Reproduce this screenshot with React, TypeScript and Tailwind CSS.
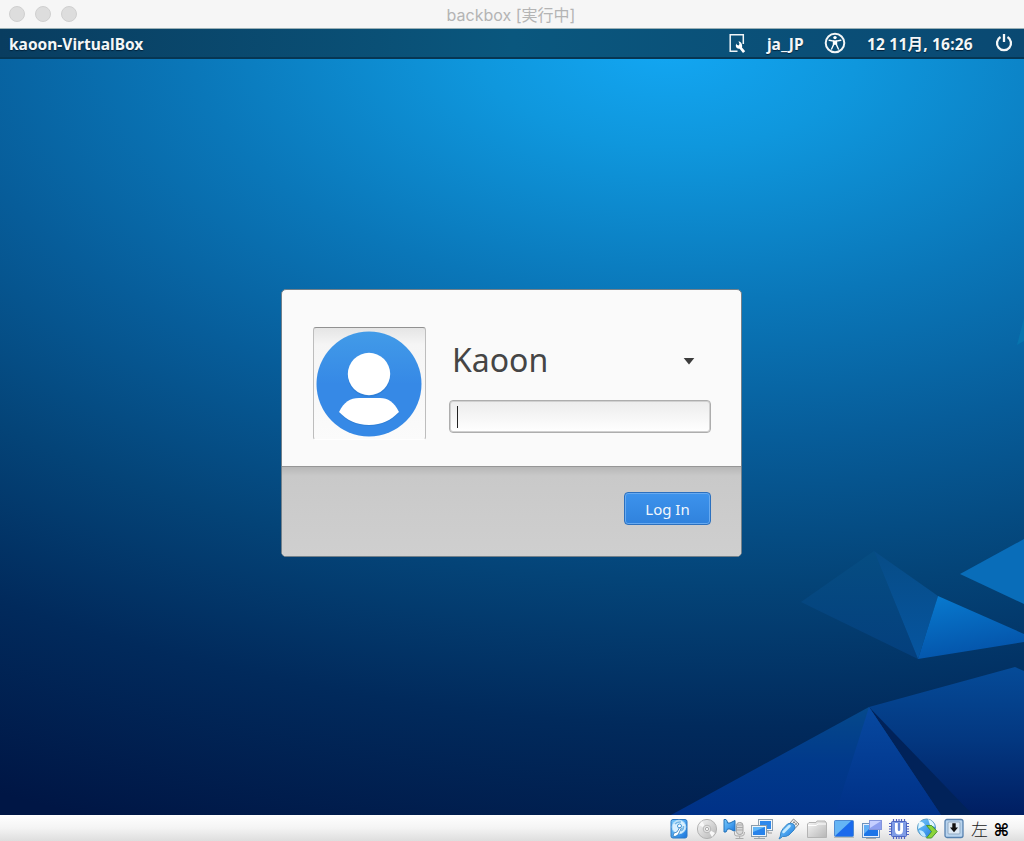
import React from "react";

function Wallpaper() {
  return (
    <svg className="col-start-1 row-start-1 block" width="1024" height="756" viewBox="0 59 1024 756" aria-hidden="true">
      <defs>
        <radialGradient id="sky" gradientUnits="userSpaceOnUse" cx="0" cy="0" r="1" gradientTransform="translate(665 45) rotate(3) scale(1600 850)">
          <stop offset="0" stopColor="#13a7f3" />
          <stop offset="0.12" stopColor="#0f97dd" />
          <stop offset="0.3" stopColor="#0a77b9" />
          <stop offset="0.46" stopColor="#075d9a" />
          <stop offset="0.63" stopColor="#044478" />
          <stop offset="0.8" stopColor="#012a5c" />
          <stop offset="1" stopColor="#001645" />
        </radialGradient>
        <linearGradient id="p1" x1="0" y1="0" x2="0" y2="1"><stop offset="0" stopColor="#064d82" /><stop offset="1" stopColor="#043f7d" /></linearGradient>
        <linearGradient id="p2" x1="0" y1="0" x2="0" y2="1"><stop offset="0" stopColor="#074c86" /><stop offset="1" stopColor="#0655a0" /></linearGradient>
        <linearGradient id="p3" x1="0" y1="0" x2="0.3" y2="1"><stop offset="0" stopColor="#087bd0" /><stop offset="1" stopColor="#0454aa" /></linearGradient>
        <linearGradient id="p4" x1="0" y1="0" x2="0" y2="1"><stop offset="0" stopColor="#05498b" /><stop offset="0.5" stopColor="#013a8b" /><stop offset="1" stopColor="#003187" /></linearGradient>
        <linearGradient id="p5" x1="0" y1="0" x2="0" y2="1"><stop offset="0" stopColor="#0749a0" /><stop offset="1" stopColor="#003087" /></linearGradient>
        <linearGradient id="p6" x1="0" y1="0" x2="0" y2="1"><stop offset="0" stopColor="#054b98" /><stop offset="0.5" stopColor="#033780" /><stop offset="1" stopColor="#001e62" /></linearGradient>
      </defs>
      <rect y="59" width="1024" height="756" fill="url(#sky)" />
      <path d="M1024 318 1017 345 1024 341Z" fill="#0878b0" opacity=".75" />
      <path d="M801 602 874 551 918 659Z" fill="url(#p1)" />
      <path d="M874 551 938 596 918 659Z" fill="url(#p2)" />
      <path d="M938 596 1024 634V642L918 659Z" fill="url(#p3)" />
      <path d="M960 574 1024 539V604Z" fill="#096db9" />
      <path d="M869 707 1015 667 1024 671V815H941Z" fill="url(#p6)" />
      <path d="M869 707 973 815H941Z" fill="#012259" />
      <path d="M869 707 941 815H671Z" fill="url(#p4)" />
      <path d="M869 707 941 815H835Z" fill="url(#p5)" />
    </svg>
  );
}

function TopPanel() {
  return (
    <div className="flex h-[30px] items-center border-b-2 border-[#063653] bg-linear-to-r from-[#093d60] via-[#0a577e] to-[#0a4972] pr-[11px] pl-[9px] font-['Noto_Sans','Noto_Sans_CJK_JP',sans-serif] text-[15.5px] leading-none font-bold text-[#f4f7f8] [text-shadow:0_1px_1px_#00223c]">
      <span className="w-[136px] pt-[3px] whitespace-nowrap">kaoon-VirtualBox</span>
      <svg className="mt-px ml-auto" width="18" height="22" viewBox="0 0 18 22" fill="none" aria-hidden="true">
        <path d="M8.5 18.2H1.2V1.7H14.3V11" stroke="#f0f5f7" strokeWidth="1.5" />
        <path d="M9.5 8.2 10.5 11 9.6 12.4 7.8 11.7 7.4 10.6C5.8 13.5 7.6 16.2 10.6 15.7L14 20 16.2 18.2 13 14.6C13.7 11.5 12 8.4 9.5 8.2Z" fill="#fff" />
      </svg>
      <span className="ml-[20px] w-[38px] pt-[3px] whitespace-nowrap">ja_JP</span>
      <svg className="ml-[19px]" width="22" height="22" viewBox="0 0 22 22" fill="none" aria-hidden="true">
        <circle cx="11" cy="11" r="9.3" stroke="#f3f6f7" strokeWidth="2" />
        <circle cx="11" cy="5.6" r="1.7" fill="#fff" />
        <path d="M5.2 8.3 9.5 9V12.8L7.6 17M16.8 8.3 12.5 9V12.8L14.4 17" stroke="#fff" strokeWidth="1.4" strokeLinecap="round" />
        <path d="M9 8.4H13V12.8H9Z" fill="#fff" />
      </svg>
      <span className="ml-[21px] w-[107px] pt-[3px] tracking-[0.2px] whitespace-nowrap">12 11月, 16:26</span>
      <svg className="ml-[21px]" width="18" height="20" viewBox="0 0 18 20" fill="none" stroke="#f5f7f8" strokeWidth="2.3" aria-hidden="true">
        <path d="M5.5 4.1A7 7 0 1 0 12.5 4.1M9 1V9" />
      </svg>
    </div>
  );
}

function Avatar() {
  return (
    <div className="flex h-[113px] w-[113px] items-center justify-center rounded-[3px] border border-t-[#919191] border-r-[#bdbdbd] border-b-white border-l-[#bdbdbd] bg-linear-to-b from-[#e5e5e5] via-[#f5f5f5] via-15% to-[#fbfbfb] pr-px">
      <svg width="106" height="106" viewBox="0 0 106 106" aria-hidden="true">
        <defs>
          <linearGradient id="avatar" x1="0" y1="0" x2="0" y2="1"><stop stopColor="#429be8" /><stop offset=".5" stopColor="#3689e6" /></linearGradient>
        </defs>
        <circle cx="53" cy="53" r="52.5" fill="url(#avatar)" />
        <g fill="#2471c3" opacity=".4" transform="translate(0 1)">
          <circle cx="53" cy="43.5" r="21.3" />
          <path d="M23 81C28 71 34 67 43 67H64C72 67 78 71 83 81C75 89 66 94 53 94S31 89 23 81Z" />
        </g>
        <g fill="#fff">
          <circle cx="53" cy="43" r="21.2" />
          <path d="M23 81C28 71 34 67 43 67H64C72 67 78 71 83 81C75 89 66 94 53 94S31 89 23 81Z" />
        </g>
      </svg>
    </div>
  );
}

function LoginCard() {
  return (
    <main className="col-start-1 row-start-1 mt-[230px] ml-[281px] h-[268px] w-[461px] overflow-hidden rounded-[5px] border border-[#72808a] bg-[#fafafa] font-['Noto_Sans',sans-serif]">
      <div className="flex h-[177px] border-b border-[#969696] pt-[37px] pl-[31px]">
        <Avatar />
        <div className="ml-[23px] w-[262px]">
          <div className="flex h-[73px] items-center justify-between pr-[16px] pb-[7px] pl-[3px] text-[32px] leading-none text-[#454545]">
            <span className="w-[96px]">Kaoon</span>
            <svg className="mt-[2px]" width="12" height="8" viewBox="0 0 12 8" aria-hidden="true"><path d="M.7 1H11.3L6 7.4Z" fill="#3c3c3c" /></svg>
          </div>
          <div className="flex h-[33px] items-center rounded-[4px] border border-[#adadad] bg-linear-to-b from-[#ececec] to-white pl-[7px] shadow-[inset_0_0_0_1px_#d0d0d0]">
            <div className="h-[22px] w-px bg-[#222]" />
          </div>
        </div>
      </div>
      <div className="flex h-[89px] justify-end bg-linear-to-b from-[#b7b7b7] via-[#c9c9c9] via-10% to-[#cfcfcf] pt-[25px] pr-[30px]">
        <button className="h-[33px] w-[87px] rounded-[4px] border border-[#2c70be] bg-linear-to-b from-[#3d93ec] to-[#3082dd] pt-px text-[15px] leading-[30px] text-[#f2f7fc] shadow-[inset_0_0_0_1px_#68aaf0]">Log In</button>
      </div>
    </main>
  );
}

type IconKind = "disk" | "cd" | "audio" | "network" | "usb" | "folder" | "display" | "windows" | "cpu" | "mouse" | "capture";

function StatusIcon({ kind }: { kind: IconKind }) {
  return (
    <svg width="22" height="22" viewBox="0 0 22 22" aria-hidden="true">
      {kind === "disk" && <>
        <rect x="3" y="1.5" width="16" height="18.5" rx="2" fill="url(#status-blue)" stroke="#2d78c3" />
        <circle cx="11" cy="9" r="6.8" fill="#d9f0ff" stroke="#b4ddf8" />
        <path d="M7 6Q9 3.5 13 4M15.5 8Q16 11 13 13" fill="none" stroke="#74b7e7" strokeWidth="1.5" />
        <circle cx="11.5" cy="8" r="2" fill="#fff" stroke="#4096d6" />
        <path d="M5 18Q5 14 9 14L12 9 13.3 10 11 15Q10 18 7 18.5Z" fill="#fff" stroke="#297abd" strokeWidth=".8" />
      </>}
      {kind === "cd" && <>
        <circle cx="11" cy="11" r="9.6" fill="url(#status-gray)" stroke="#b3b3b3" />
        <path d="m10 10-4-7-3 4 7 4M12 12l4 7 3-4-7-4" fill="#f8f8f8" />
        <circle cx="11" cy="11" r="3.8" fill="#e4e4e4" stroke="#b7b7b7" />
        <circle cx="11" cy="11" r="1.6" fill="#fff" stroke="#aaa" />
      </>}
      {kind === "audio" && <>
        <path d="M1 1.5H3Q4.5 3 4.5 5H7L12 2.5V13.5L7 11H4.5L3 14H1Z" fill="url(#status-blue)" stroke="#2572b8" />
        <rect x="13.5" y="4.5" width="6.5" height="12" rx="3" fill="#d8d8d8" stroke="#a3a3a3" />
        <path d="M13.5 7H20M13.5 9.5H20M13.5 12H20M11.5 13v3Q11.5 18 14 18H19Q21.5 18 21.5 14M16.7 18v2M12.5 20.5h8" stroke="#ababab" fill="none" />
      </>}
      {kind === "network" && <>
        <rect x="7.5" y="1.5" width="14" height="11" fill="#f2f6f9" stroke="#8c9faf" />
        <rect x="9" y="3" width="11" height="8" fill="#3189eb" />
        <path d="M17 13v2h4" stroke="#999" fill="none" />
        <rect x=".5" y="7.5" width="15" height="11" fill="#eef5fa" stroke="#899cab" />
        <rect x="2" y="9" width="12" height="8" fill="#2783eb" />
        <path d="M2 9H14L2 14Z" fill="#61b7f8" />
        <path d="M8 19v1M3 20.5h11" stroke="#9ba5ad" fill="none" />
      </>}
      {kind === "usb" && <>
        <path d="m12 5 3.5-4L21 6 17 10.5Z" fill="#eeeeee" stroke="#888" />
        <path d="M1 21Q2.5 19 3 14Q4 11 9.5 6Q13 4 16 6.5Q18 9 16 12L11 17Q8 19 4.5 18.5Q3 20 1 21Z" fill="url(#status-blue)" stroke="#3985c5" />
        <path d="M5.5 14 11.5 8" stroke="#c5eaff" strokeWidth="2.5" strokeLinecap="round" />
        <circle cx="16" cy="4.3" r=".8" fill="#555" /><circle cx="18" cy="6" r=".8" fill="#555" />
      </>}
      {kind === "folder" && <>
        <path d="M1.5 19.5V6L3 4.5H10L11 3H19L20.5 5V19.5Z" fill="url(#status-gray)" stroke="#b4b4b4" />
        <path d="M2 7.5H10L12 6H20" stroke="#fff" fill="none" />
      </>}
      {kind === "display" && <>
        <rect x="1.5" y="2.5" width="19" height="16" rx="1" fill="#1b6aec" stroke="#508bd0" />
        <path d="M2 3H18L2 18Z" fill="#65b5f5" />
        <path d="M1 19.5H21" stroke="#bbb" />
      </>}
      {kind === "windows" && <>
        <rect x="1.5" y="5.5" width="17" height="14" fill="#e7effc" stroke="#6e93bd" />
        <rect x="3" y="7" width="14" height="11" fill="#1c75e8" />
        <path d="M3 7H12L3 16Z" fill="#62aff6" />
        <rect x="8.5" y="2.5" width="12" height="9" fill="#8d9ff0" stroke="#8495dc" />
        <path d="M9 3H20L9 10Z" fill="#c5cfff" />
        <path d="M5 20.5h10" stroke="#aaa" />
      </>}
      {kind === "cpu" && <>
        <path d="M5.5 1V21M8.5 1V21M11 1V21M13.5 1V21M16.5 1V21M1 5.5H21M1 8.5H21M1 11H21M1 13.5H21M1 16.5H21" stroke="#5362c4" strokeWidth="1.2" />
        <rect x="3.5" y="3.5" width="15" height="15" rx="1" fill="#7f9ce6" stroke="#4e67c2" />
        <path d="M7 5H15V12Q15 16.5 11 16.5T7 12Z" fill="#fff" />
        <path d="M9.8 5H12.2V11.5Q12.2 13 11 13T9.8 11.5Z" fill="#6886d8" />
      </>}
      {kind === "mouse" && <>
        <circle cx="10.5" cy="10" r="9" fill="url(#status-blue)" stroke="#5b9cc3" />
        <path d="M3 3.5Q7 3 9 7L2 11ZM12 1Q18 3 19 9L14 7Z" fill="#e0f6ff" />
        <path d="M3 12Q8 12 10 18L8 19Q4 17 3 12" fill="#bee9ff" />
        <path d="M10.5 7.5H15.5L21.2 13.5 15.5 20H10.5L14.5 15 15.5 13.5Z" fill="#8bd439" stroke="#4b9431" strokeLinejoin="round" />
      </>}
      {kind === "capture" && <>
        <rect x="2" y="1.5" width="18" height="18" rx="2" fill="#b9d4ee" stroke="#5681af" strokeWidth="1.3" />
        <rect x="5" y="4" width="12" height="12" rx="1" fill="#dce9f5" stroke="#91abc4" />
        <path d="M9.3 5.3H12.7V9.5H15L11 14.3 7 9.5H9.3Z" fill="#111" />
      </>}
    </svg>
  );
}

const statusIcons: IconKind[] = ["disk", "cd", "audio", "network", "usb", "folder", "display", "windows", "cpu", "mouse", "capture"];

function StatusBar() {
  return (
    <footer className="flex h-[26px] items-center justify-end bg-linear-to-b from-white via-[#f4f4f4] to-[#dedede] pt-px pr-[14px]">
      <svg className="h-0 w-0" aria-hidden="true">
        <defs>
          <linearGradient id="status-blue" x1="0" y1="0" x2="1" y2="1"><stop stopColor="#75c7fa" /><stop offset=".5" stopColor="#4ba4ef" /><stop offset="1" stopColor="#1873dd" /></linearGradient>
          <linearGradient id="status-gray" x1="0" y1="0" x2="1" y2="1"><stop stopColor="#f7f7f7" /><stop offset="1" stopColor="#b5b5b5" /></linearGradient>
        </defs>
      </svg>
      <div className="flex gap-[5.5px]">
        {statusIcons.map((kind) => <StatusIcon key={kind} kind={kind} />)}
      </div>
      <span className="ml-[6px] w-[17px] font-['Noto_Sans_CJK_JP',sans-serif] text-[17px] leading-none font-light text-[#222]">左</span>
      <span className="ml-[5px] w-[17px] pt-[3px] text-center font-['DejaVu_Sans',sans-serif] text-[17px] leading-none font-bold text-black">⌘</span>
    </footer>
  );
}

export default function App() {
  return (
    <div className="h-[841px] w-[1024px] overflow-hidden bg-[#001746]">
      <header className="grid h-[29px] grid-cols-[1fr_140px_1fr] items-center border-b border-[#9bb0b5] bg-[#f6f6f6]">
        <div className="flex gap-[10px] pl-[9px]">
          <div className="h-4 w-4 rounded-full border border-[#d0d0d0] bg-[#dddddd]" />
          <div className="h-4 w-4 rounded-full border border-[#d0d0d0] bg-[#dddddd]" />
          <div className="h-4 w-4 rounded-full border border-[#d0d0d0] bg-[#dddddd]" />
        </div>
        <h1 className="pt-px pr-[2px] text-center font-[Inter,'Noto_Sans_CJK_JP',sans-serif] text-[16px] leading-none whitespace-nowrap text-[#b4b4b4]">backbox [実行中]</h1>
      </header>
      <TopPanel />
      <div className="grid h-[756px] grid-cols-1">
        <Wallpaper />
        <LoginCard />
      </div>
      <StatusBar />
    </div>
  );
}
